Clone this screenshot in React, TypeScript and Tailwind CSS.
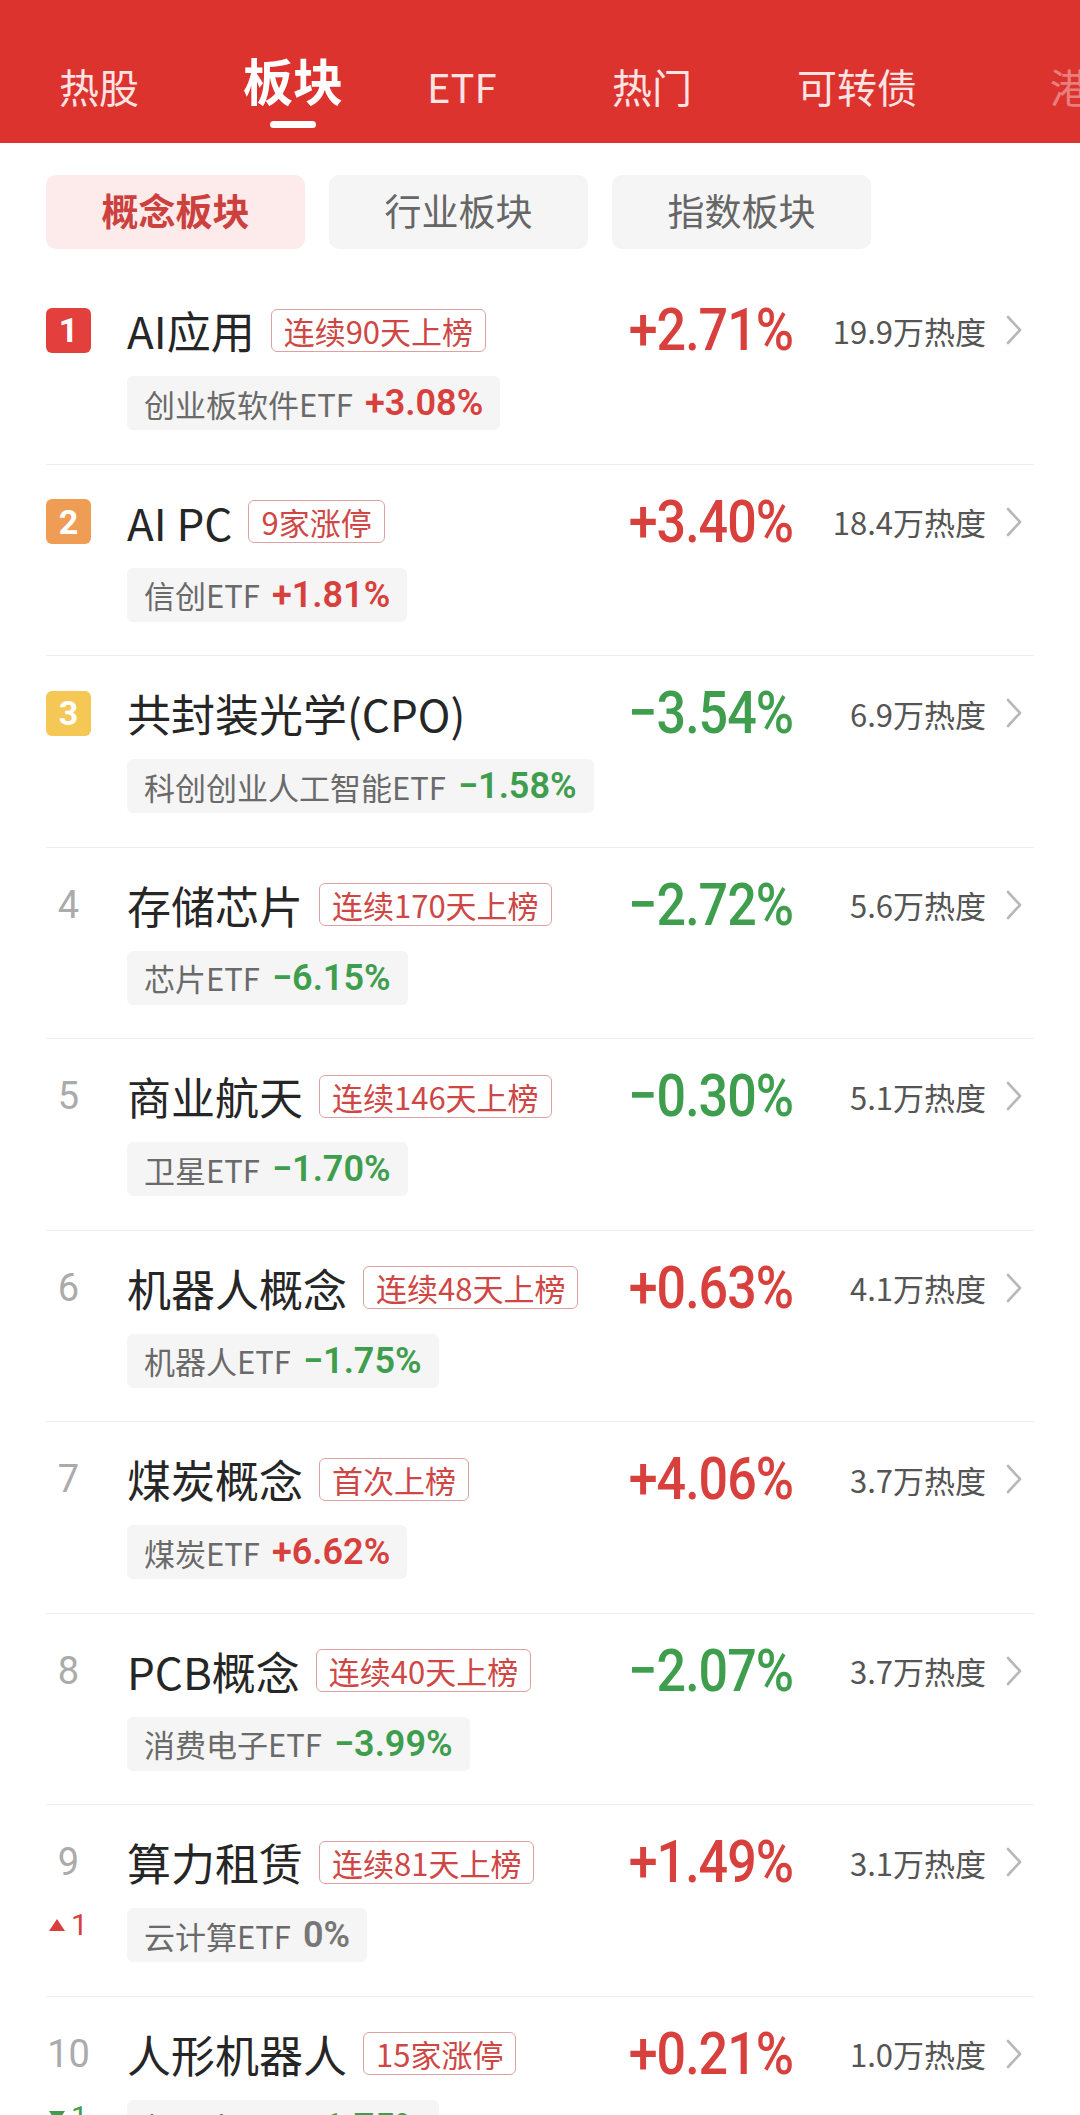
import React from "react";

type Row = {
  rank: number;
  title: string;
  tag?: string;
  pct: string;
  heat: string;
  etf: string;
  etfPct: string;
  move?: "up" | "down";
};

const rows: Row[] = [
  { rank: 1, title: "AI应用", tag: "连续90天上榜", pct: "+2.71%", heat: "19.9万热度", etf: "创业板软件ETF", etfPct: "+3.08%" },
  { rank: 2, title: "AI PC", tag: "9家涨停", pct: "+3.40%", heat: "18.4万热度", etf: "信创ETF", etfPct: "+1.81%" },
  { rank: 3, title: "共封装光学(CPO)", pct: "−3.54%", heat: "6.9万热度", etf: "科创创业人工智能ETF", etfPct: "−1.58%" },
  { rank: 4, title: "存储芯片", tag: "连续170天上榜", pct: "−2.72%", heat: "5.6万热度", etf: "芯片ETF", etfPct: "−6.15%" },
  { rank: 5, title: "商业航天", tag: "连续146天上榜", pct: "−0.30%", heat: "5.1万热度", etf: "卫星ETF", etfPct: "−1.70%" },
  { rank: 6, title: "机器人概念", tag: "连续48天上榜", pct: "+0.63%", heat: "4.1万热度", etf: "机器人ETF", etfPct: "−1.75%" },
  { rank: 7, title: "煤炭概念", tag: "首次上榜", pct: "+4.06%", heat: "3.7万热度", etf: "煤炭ETF", etfPct: "+6.62%" },
  { rank: 8, title: "PCB概念", tag: "连续40天上榜", pct: "−2.07%", heat: "3.7万热度", etf: "消费电子ETF", etfPct: "−3.99%" },
  { rank: 9, title: "算力租赁", tag: "连续81天上榜", pct: "+1.49%", heat: "3.1万热度", etf: "云计算ETF", etfPct: "0%", move: "up" },
  { rank: 10, title: "人形机器人", tag: "15家涨停", pct: "+0.21%", heat: "1.0万热度", etf: "机器人ETF", etfPct: "−1.75%", move: "down" },
];

const CJK = { fontFamily: '"Noto Sans CJK SC", "Noto Sans", sans-serif' };
const NUM = { fontFamily: 'Roboto, "Noto Sans CJK SC", sans-serif' };

function pctColor(p: string) {
  if (p.startsWith("+")) return "text-[#d8403d]";
  if (p.startsWith("−")) return "text-[#3f9e4e]";
  return "text-[#777777]";
}

function RankBadge({ rank }: { rank: number }) {
  if (rank <= 3) {
    const bg = rank === 1 ? "bg-[#e33f3d]" : rank === 2 ? "bg-[#ef9d55]" : "bg-[#f5c755]";
    return (
      <div
        className={`w-[45px] h-[45px] rounded-[6px] ${bg} flex items-center justify-center text-white text-[34px] font-bold leading-none`}
        style={NUM}
      >
        {rank}
      </div>
    );
  }
  return (
    <div className="text-[38px] text-[#ababab] leading-none" style={NUM}>
      {rank}
    </div>
  );
}

function Chevron() {
  return (
    <svg width="16" height="30" viewBox="0 0 16 30" className="block">
      <polyline points="2,2 14,15 2,28" fill="none" stroke="#b8b8b8" strokeWidth="2.6" strokeLinecap="round" strokeLinejoin="round" />
    </svg>
  );
}

function ListRow({ r }: { r: Row }) {
  return (
    <div className="h-[191.5px] border-b border-[#eeeeee] pt-[35px] flex flex-col">
      <div className="h-[44px] flex items-center">
        <div className="w-[45px] flex justify-center shrink-0">
          <RankBadge rank={r.rank} />
        </div>
        <div className="ml-[36px] text-[44px] text-[#262626] leading-none whitespace-nowrap" style={CJK}>
          {r.title}
        </div>
        {r.tag && (
          <div
            className="ml-[16px] h-[43px] px-[12px] border-[1.5px] border-[#dca1a1] rounded-[6px] flex items-center text-[31px] text-[#cf4744] leading-none whitespace-nowrap"
            style={CJK}
          >
            {r.tag}
          </div>
        )}
        <div className="flex-1" />
        <span
          className={`inline-block scale-y-[1.15] text-[52px] font-medium tracking-[-1px] leading-none ${pctColor(r.pct)}`}
          style={NUM}
        >
          {r.pct}
        </span>
        <div className="w-[193px] text-right text-[31px] text-[#555555] leading-none whitespace-nowrap" style={CJK}>
          {r.heat}
        </div>
        <div className="ml-[20px] mr-[12px]">
          <Chevron />
        </div>
      </div>
      <div className="mt-[24px] flex items-start">
        <div className="w-[45px] shrink-0 flex justify-center pt-[2px]">
          {r.move === "up" && (
            <div className="flex items-center gap-[6px]">
              <svg width="16" height="12" viewBox="0 0 16 12">
                <polygon points="8,0 16,12 0,12" fill="#d8403d" />
              </svg>
              <span className="text-[30px] leading-[30px] text-[#d8403d]" style={NUM}>1</span>
            </div>
          )}
          {r.move === "down" && (
            <div className="flex items-center gap-[6px]">
              <svg width="16" height="12" viewBox="0 0 16 12">
                <polygon points="0,0 16,0 8,12" fill="#3f9e4e" />
              </svg>
              <span className="text-[30px] leading-[30px] text-[#3f9e4e]" style={NUM}>1</span>
            </div>
          )}
        </div>
        <div className="ml-[36px] h-[54px] rounded-[6px] bg-[#f5f5f5] px-[17px] flex items-center gap-[12px] whitespace-nowrap">
          <span className="text-[31px] text-[#6a6a6a] leading-none" style={CJK}>{r.etf}</span>
          <span className={`text-[36px] font-semibold leading-none ${pctColor(r.etfPct)}`} style={NUM}>
            {r.etfPct}
          </span>
        </div>
      </div>
    </div>
  );
}

export default function App() {
  const tabs = [
    { t: "热股", w: "w-[184px]" },
    { t: "板块", w: "w-[184px]", active: true },
    { t: "ETF", w: "w-[185px]" },
    { t: "热门", w: "w-[185px]" },
    { t: "可转债", w: "w-[253px]" },
  ];
  return (
    <div className="w-[1080px] h-[2115px] overflow-hidden bg-white" style={CJK}>
      <div className="h-[143px] bg-[#dc332f] flex items-start pl-[59px] overflow-hidden">
        {tabs.map((tab) =>
          tab.active ? (
            <div key={tab.t} className={`${tab.w} shrink-0 mt-[51px]`}>
              <div className="inline-flex flex-col items-center">
                <span className="text-[50px] leading-[56px] font-bold text-white">{tab.t}</span>
                <span className="mt-[14px] w-[46px] h-[7px] rounded-full bg-white" />
              </div>
            </div>
          ) : (
            <div key={tab.t} className={`${tab.w} shrink-0 mt-[62px] text-[40px] leading-[48px] text-[#fde4e3]`}>
              {tab.t}
            </div>
          )
        )}
        <div className="shrink-0 mt-[62px] text-[40px] leading-[48px] text-white/40">港</div>
      </div>

      <div className="pt-[32px] pb-[24px] px-[46px] flex gap-[24px]">
        <div className="w-[259px] h-[74px] rounded-[10px] bg-[#fdeaea] flex items-center justify-center pb-[3px] text-[37px] font-bold text-[#cc403d]">
          概念板块
        </div>
        <div className="w-[259px] h-[74px] rounded-[10px] bg-[#f5f5f5] flex items-center justify-center pb-[3px] text-[37px] text-[#666666]">
          行业板块
        </div>
        <div className="w-[259px] h-[74px] rounded-[10px] bg-[#f5f5f5] flex items-center justify-center pb-[3px] text-[37px] text-[#666666]">
          指数板块
        </div>
      </div>

      <div className="px-[46px]">
        {rows.map((r) => (
          <ListRow key={r.rank} r={r} />
        ))}
      </div>
    </div>
  );
}
